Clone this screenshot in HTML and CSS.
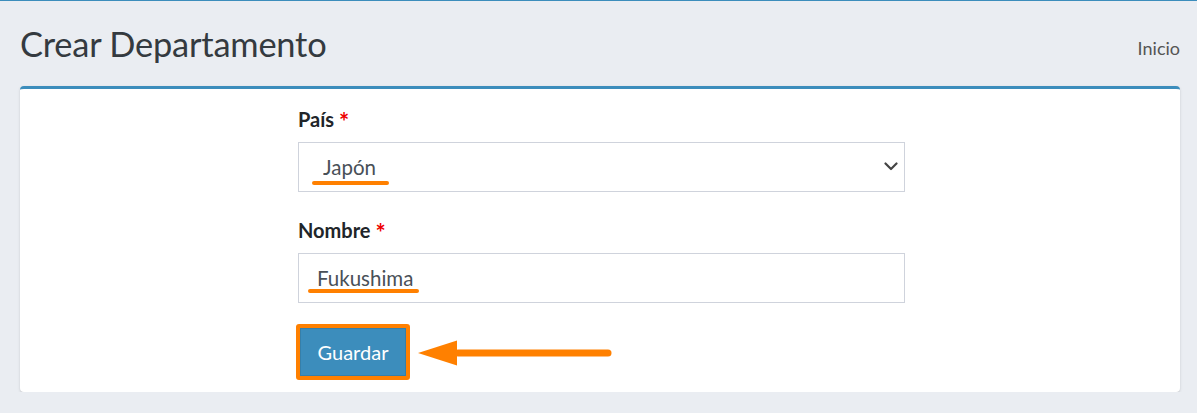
FILE: index.html
```html
<!DOCTYPE html>
<html lang="es">
<head>
<meta charset="utf-8">
<title>Crear Departamento</title>
<link rel="stylesheet" href="styles.css">
</head>
<body>
<div class="page">
  <header class="content-header">
    <h1 class="page-title">Crear Departamento</h1>
    <nav class="breadcrumb">Inicio</nav>
  </header>
  <section class="card">
    <form class="form">
      <div class="form-group">
        <label class="label">País <span class="req">*</span></label>
        <div class="select-wrap">
          <select class="control select">
            <option>Japón</option>
          </select>
          <svg class="chevron" width="14" height="9" viewBox="0 0 14 9"><path d="M1.5 1.5 L7 7 L12.5 1.5" fill="none" stroke="#444" stroke-width="2.2" stroke-linecap="round" stroke-linejoin="round"/></svg>
          <span class="mark mark-country"></span>
        </div>
      </div>
      <div class="form-group">
        <label class="label">Nombre <span class="req">*</span></label>
        <div class="select-wrap">
          <input class="control input" type="text" value="Fukushima">
          <span class="mark mark-name"></span>
        </div>
      </div>
      <div class="actions">
        <button type="button" class="btn">Guardar</button>
        <svg class="arrow" width="200" height="28" viewBox="0 0 200 28"><path d="M42 14 L192 14" stroke="#ff8000" stroke-width="7" stroke-linecap="round"/><path d="M2 14 L41 1.5 L41 26.5 Z" fill="#ff8000"/></svg>
      </div>
    </form>
  </section>
</div>
</body>
</html>
```
FILE: styles.css
```css
* { box-sizing: border-box; }
html, body { margin: 0; padding: 0; }
body {
  background: #eaedf2;
  font-family: "Lato", "Liberation Sans", sans-serif;
  color: #212529;
  border-top: 1px solid #3c8dbc;
}
.page { padding: 0 17px 0 20px; }
.content-header {
  display: flex;
  justify-content: space-between;
  align-items: center;
  height: 85px;
}
.page-title {
  margin: 0;
  font-weight: 400;
  font-size: 34.4px;
  color: #343a40;
  letter-spacing: -0.2px;
  line-height: 1;
  padding-top: 2px;
}
.breadcrumb {
  font-size: 18px;
  color: #555;
  padding-top: 8px;
}
.card {
  background: #fff;
  border-top: 3px solid #3c8dbc;
  border-radius: 4px;
  box-shadow: 0 1px 3px rgba(0,0,0,0.13), 0 1px 1px rgba(0,0,0,0.06);
  padding: 15px 0 12px;
  width: 1160px;
  display: flex;
  justify-content: center;
}
.form { width: 607px; margin-left: 3px; }
.form-group { margin-bottom: 23px; }
.form-group + .form-group { margin-bottom: 21px; }
.label {
  display: block;
  font-weight: 700;
  font-size: 20px;
  line-height: 30px;
  margin-bottom: 8px;
  color: #212529;
}
.req {
  color: #e00;
  font-size: 24px;
  line-height: 20px;
  vertical-align: -4px;
}
.select-wrap { position: relative; }
.control {
  display: block;
  width: 100%;
  height: 50px;
  border: 1px solid #cfd3dc;
  border-radius: 0;
  background: #fff;
  font-family: "Lato", "Liberation Sans", sans-serif;
  font-size: 20.5px;
  color: #495057;
  outline: none;
}
.select {
  appearance: none;
  -webkit-appearance: none;
  padding: 0 40px 0 24px;
}
.input { padding: 0 18px; }
.chevron { position: absolute; right: 7px; top: 20px; }
.mark {
  position: absolute;
  height: 4px;
  border-radius: 2px;
  background: #ff8000;
}
.mark-country { left: 14px; width: 77px; top: 39px; }
.mark-name { left: 10px; width: 111px; top: 36px; }
.actions { display: flex; align-items: center; gap: 6px; margin-left: -2px; }
.btn {
  height: 56px;
  width: 114px;
  background: #3c8dbc;
  color: #fff;
  font-family: "Lato", "Liberation Sans", sans-serif;
  font-size: 20px;
  border: 4px solid #ff8000;
  border-radius: 3px;
  box-shadow: inset 0 0 0 1px #367fa9;
  padding: 0;
}
.arrow { display: block; margin-top: 1px; }
```
